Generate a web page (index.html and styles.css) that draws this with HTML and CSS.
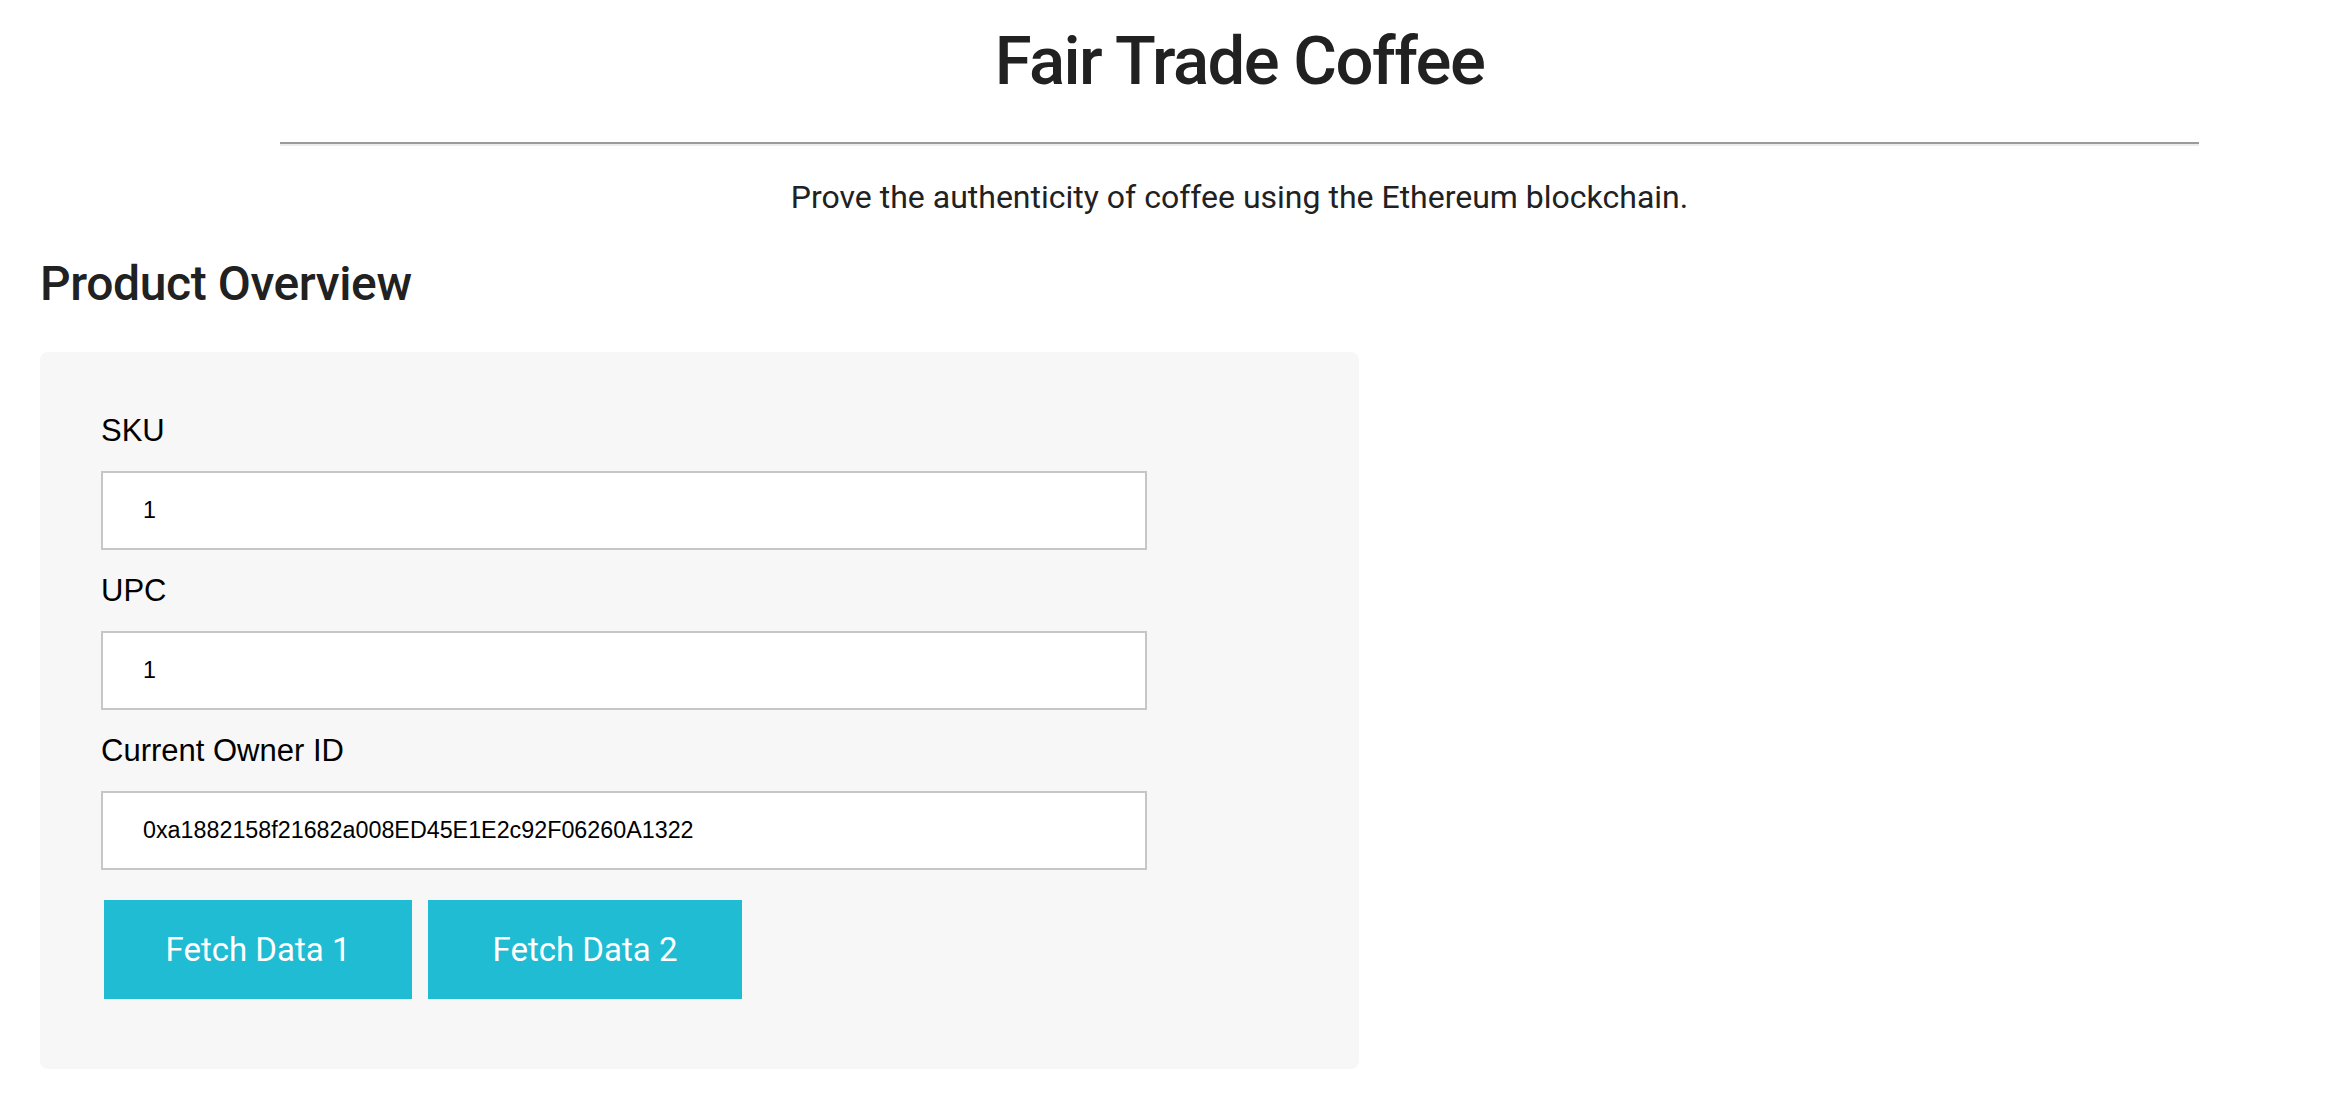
FILE: index.html
```html
<!DOCTYPE html>
<html lang="en">
<head>
<meta charset="utf-8">
<title>Fair Trade Coffee</title>
<link rel="stylesheet" href="styles.css">
</head>
<body>
<header class="hero">
  <h1 class="title">Fair Trade Coffee</h1>
  <hr class="divider">
  <p class="lead">Prove the authenticity of coffee using the Ethereum blockchain.</p>
</header>
<main class="content">
  <h2 class="section-title">Product Overview</h2>
  <div class="panel">
    <form class="form">
      <div class="field">
        <label class="field-label" for="sku">SKU</label>
        <input class="field-input" id="sku" type="text" value="1">
      </div>
      <div class="field">
        <label class="field-label" for="upc">UPC</label>
        <input class="field-input" id="upc" type="text" value="1">
      </div>
      <div class="field">
        <label class="field-label" for="owner">Current Owner ID</label>
        <input class="field-input" id="owner" type="text" value="0xa1882158f21682a008ED45E1E2c92F06260A1322">
      </div>
      <div class="actions">
        <button class="btn" type="button">Fetch Data 1</button>
        <button class="btn btn-wide" type="button">Fetch Data 2</button>
      </div>
    </form>
  </div>
</main>
</body>
</html>
```
FILE: styles.css
```css
* {
  box-sizing: border-box;
}

html, body {
  margin: 0;
  padding: 0;
  background: #ffffff;
}

body {
  font-family: Roboto, "Liberation Sans", Arial, sans-serif;
  color: #212121;
}

.hero {
  padding: 19px 151px 0 280px;
  text-align: center;
}

.title {
  margin: 0;
  font-size: 67px;
  line-height: 84px;
  font-weight: 500;
  letter-spacing: -1.5px;
  color: #212121;
}

.divider {
  margin: 39px 0 0;
  height: 0;
  border: 0;
  border-top: 2px solid #9b9b9b;
  border-bottom: 2px solid #ececec;
}

.lead {
  margin: 32px 0 0;
  font-size: 32px;
  line-height: 38px;
  font-weight: 400;
  color: #212121;
}

.content {
  padding: 0 40px;
}

.section-title {
  margin: 38px 0 0;
  font-size: 48px;
  line-height: 60px;
  font-weight: 500;
  letter-spacing: -0.4px;
  color: #212121;
}

.panel {
  margin-top: 38px;
  width: 1319px;
  background: #f7f7f7;
  border-radius: 8px;
  padding: 60px 61px 70px;
}

.form {
  margin: 0;
}

.field {
  display: flex;
  flex-direction: column;
  align-items: flex-start;
}

.field-label {
  font-family: "Liberation Sans", Arial, Helvetica, sans-serif;
  font-size: 31px;
  line-height: 38px;
  color: #000000;
  margin-bottom: 21px;
}

.field-input {
  width: 1046px;
  height: 79px;
  margin: 0 0 22px;
  padding: 0 0 0 40px;
  border: 2px solid #c6c6c6;
  border-radius: 0;
  background: #ffffff;
  font-family: "Liberation Sans", Arial, Helvetica, sans-serif;
  font-size: 23.3px;
  color: #000000;
  outline: none;
}

.actions {
  display: flex;
  gap: 16px;
  margin-top: 8px;
  padding-left: 3px;
}

.btn {
  width: 308px;
  height: 99px;
  padding: 0;
  border: 0;
  border-radius: 0;
  background: #1fbcd3;
  color: #ffffff;
  font-family: Roboto, "Liberation Sans", Arial, sans-serif;
  font-size: 33px;
  font-weight: 400;
  cursor: pointer;
}

.btn-wide {
  width: 314px;
}
```
